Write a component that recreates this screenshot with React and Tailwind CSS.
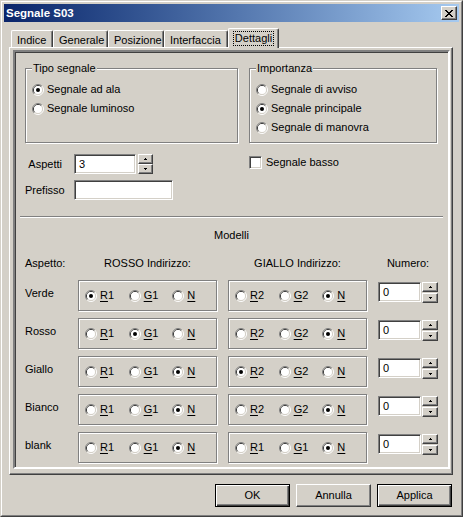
import React from 'react';

const raised = 'border border-t-white border-l-white border-b-[#404040] border-r-[#404040] shadow-[inset_-1px_-1px_0_#808080]';
const sunken = 'border border-t-[#808080] border-l-[#808080] border-b-white border-r-white shadow-[inset_1px_1px_0_#404040,inset_-1px_-1px_0_#d4d0c8]';
const etched = 'border border-[#808080] shadow-[1px_1px_0_#fff,inset_1px_1px_0_#fff]';

function Radio({ checked }) {
  return (
    <svg width="12" height="12" viewBox="0 0 12 12" className="shrink-0">
      <path d="M2.11 9.89 A5.5 5.5 0 0 1 9.89 2.11" fill="none" stroke="#808080" />
      <path d="M9.89 2.11 A5.5 5.5 0 0 1 2.11 9.89" fill="none" stroke="#ffffff" />
      <path d="M2.82 9.18 A4.5 4.5 0 0 1 9.18 2.82" fill="none" stroke="#404040" />
      <path d="M9.18 2.82 A4.5 4.5 0 0 1 2.82 9.18" fill="none" stroke="#d4d0c8" />
      <circle cx="6" cy="6" r="4" fill="#ffffff" />
      {checked && <circle cx="6" cy="6" r="2" fill="#000000" />}
    </svg>
  );
}

function Arrow({ up }) {
  return (
    <svg width="3" height="2" viewBox="0 0 3 2" shapeRendering="crispEdges">
      {up ? (
        <>
          <rect x="1" y="0" width="1" height="1" fill="#000" />
          <rect x="0" y="1" width="3" height="1" fill="#000" />
        </>
      ) : (
        <>
          <rect x="0" y="0" width="3" height="1" fill="#000" />
          <rect x="1" y="1" width="1" height="1" fill="#000" />
        </>
      )}
    </svg>
  );
}

function Spin({ wide }) {
  return (
    <div className={`flex flex-col ${wide ? 'w-[16px] gap-px' : 'w-[15px]'}`}>
      <div className={`h-[10px] flex items-center justify-center bg-[#d4d0c8] ${raised}`}>
        <Arrow up />
      </div>
      <div className={`h-[10px] flex items-center justify-center bg-[#d4d0c8] ${raised}`}>
        <Arrow />
      </div>
    </div>
  );
}

function Group({ label, className, children }) {
  return (
    <div className={`relative ${etched} ${className}`}>
      <span className="absolute left-[6px] -top-[7px] bg-[#d4d0c8] px-px leading-[13px]">{label}</span>
      {children}
    </div>
  );
}

function OptRow({ checked, children }) {
  return (
    <div className="h-[19px] flex items-center pl-[6px] gap-[3px]">
      <Radio checked={checked} />
      <span>{children}</span>
    </div>
  );
}

function Key({ k, rest }) {
  return (
    <span>
      <span className="underline underline-offset-[2px]">{k}</span>
      {rest}
    </span>
  );
}

function AddrBox({ labels, sel }) {
  return (
    <div className={`w-[139px] h-[31px] flex items-center pl-[6px] ${etched}`}>
      {labels.map((l, i) => (
        <div key={i} className="w-[45px] flex items-center gap-[3px]">
          <Radio checked={sel === i} />
          <Key k={l[0]} rest={l.slice(1)} />
        </div>
      ))}
    </div>
  );
}

const rows = [
  { name: 'Verde', r: 0, g: 2, gl: ['R2', 'G2', 'N'] },
  { name: 'Rosso', r: 1, g: 2, gl: ['R2', 'G2', 'N'] },
  { name: 'Giallo', r: 2, g: 0, gl: ['R2', 'G2', 'N'] },
  { name: 'Bianco', r: 2, g: 2, gl: ['R2', 'G2', 'N'] },
  { name: 'blank', r: 2, g: 2, gl: ['R1', 'G1', 'N'] },
];

const tabs = [
  { label: 'Indice', w: 'w-[42px]' },
  { label: 'Generale', w: 'w-[55px]' },
  { label: 'Posizione', w: 'w-[56px]' },
  { label: 'Interfaccia', w: 'w-[64px]' },
];

export default function App() {
  return (
    <div className="w-[463px] h-[517px] bg-[#d4d0c8] border border-t-[#d4d0c8] border-l-[#d4d0c8] border-b-[#404040] border-r-[#404040] font-['Liberation_Sans',Arial,sans-serif] text-[11px] leading-[13px] text-black">
      <div className="h-full flex flex-col p-[2px] border border-t-white border-l-white border-b-[#808080] border-r-[#808080]">
        {/* title bar */}
        <div className="h-[18px] shrink-0 flex items-center justify-between pl-[2px] pr-[2px] bg-linear-to-r from-[#0a246a] to-[#a6caf0]">
          <span className="font-bold text-white text-[11.5px]">Segnale S03</span>
          <div className={`w-[16px] h-[14px] flex items-center justify-center bg-[#d4d0c8] ${raised}`}>
            <svg width="8" height="7" viewBox="0 0 8 7" shapeRendering="crispEdges">
              <path d="M0 0h2v1h-2zM6 0h2v1h-2zM1 1h2v1h-2zM5 1h2v1h-2zM2 2h4v1h-4zM3 3h2v1h-2zM2 4h4v1h-4zM1 5h2v1h-2zM5 5h2v1h-2zM0 6h2v1h-2zM6 6h2v1h-2z" fill="#000" />
            </svg>
          </div>
        </div>

        {/* tab control */}
        <div className="mt-[6px] ml-[5px] mr-[6px]">
          <div className="flex items-end pl-[2px]">
            {tabs.map((t) => (
              <div
                key={t.label}
                className={`${t.w} h-[17px] flex items-center pl-[5px] pt-[2px] border-t border-l border-r border-t-white border-l-white border-r-[#404040] rounded-tl-[2px] rounded-tr-[2px] shadow-[inset_-1px_0_0_#808080]`}
              >
                {t.label}
              </div>
            ))}
            <div className="relative z-10 w-[51px] h-[20px] -mb-px flex items-center justify-center bg-[#d4d0c8] border-t border-l border-r border-t-white border-l-white border-r-[#404040] rounded-tl-[2px] rounded-tr-[2px] shadow-[inset_-1px_0_0_#808080]">
              <span className="border border-dotted border-black px-px leading-[13px]">Dettagli</span>
            </div>
          </div>

          <div className={`h-[428px] pt-[2px] pl-[3px] pr-[2px] pb-[5px] ${raised}`}>
            <div className={`h-full flex flex-col border-2 border-t-[#808080] border-l-[#808080] border-b-white border-r-white shadow-[inset_1px_1px_0_#404040,inset_-1px_-1px_0_#d4d0c8]`}>
              {/* top section */}
              <div className="mt-[16px] pl-[10px] flex">
                <div className="w-[213px] flex flex-col">
                  <Group label="Tipo segnale" className="h-[75px] pt-[11px]">
                    <OptRow checked>Segnale ad ala</OptRow>
                    <OptRow>Segnale luminoso</OptRow>
                  </Group>
                  <div className="mt-[11px] h-[20px] flex items-center">
                    <span className="w-[37px] text-right">Aspetti</span>
                    <div className={`ml-[12px] w-[62px] h-[20px] bg-white flex items-center pl-[4px] ${sunken}`}>3</div>
                    <div className="ml-[2px]">
                      <Spin />
                    </div>
                  </div>
                  <div className="mt-[6px] h-[20px] flex items-center">
                    <span className="w-[37px] text-right">Prefisso</span>
                    <div className={`ml-[12px] w-[99px] h-[20px] bg-white ${sunken}`} />
                  </div>
                </div>
                <div className="ml-[11px] w-[188px] flex flex-col">
                  <Group label="Importanza" className="h-[75px] pt-[11px]">
                    <OptRow>Segnale di avviso</OptRow>
                    <OptRow checked>Segnale principale</OptRow>
                    <OptRow>Segnale di manovra</OptRow>
                  </Group>
                  <div className="mt-[13px] flex items-center gap-[4px]">
                    <div className={`w-[13px] h-[13px] bg-white ${sunken}`} />
                    <span>Segnale basso</span>
                  </div>
                </div>
              </div>

              {/* separator */}
              <div className="mt-[16px] ml-[5px] w-[423px] border-t border-t-[#808080] border-b border-b-white" />

              <div className="mt-[10px] h-[14px] leading-[14px] text-center">Modelli</div>

              <div className="mt-[14px] h-[14px] leading-[14px] flex pl-[10px]">
                <span className="w-[53px]">Aspetto:</span>
                <span className="w-[139px] text-center">ROSSO Indirizzo:</span>
                <span className="ml-[11px] w-[139px] text-center">GIALLO Indirizzo:</span>
                <span className="ml-[11px] w-[60px] text-center">Numero:</span>
              </div>

              <div className="mt-[10px] flex flex-col gap-[7px] pl-[10px]">
                {rows.map((r) => (
                  <div key={r.name} className="h-[31px] flex">
                    <span className="w-[53px] pt-[6px] leading-[14px]">{r.name}</span>
                    <AddrBox labels={['R1', 'G1', 'N']} sel={r.r} />
                    <div className="ml-[11px]">
                      <AddrBox labels={r.gl} sel={r.g} />
                    </div>
                    <div className={`ml-[11px] mt-[2px] w-[43px] h-[20px] bg-white flex items-center pl-[4px] ${sunken}`}>0</div>
                    <div className="ml-px mt-[2px]">
                      <Spin wide />
                    </div>
                  </div>
                ))}
              </div>
            </div>
          </div>
        </div>

        {/* buttons */}
        <div className="mt-[9px] flex justify-end gap-[6px] pr-[7px]">
          <div className="w-[75px] h-[23px] flex items-center justify-center bg-[#d4d0c8] border border-black shadow-[inset_1px_1px_0_#fff,inset_-1px_-1px_0_#404040,inset_-2px_-2px_0_#808080]">OK</div>
          <div className={`w-[75px] h-[23px] flex items-center justify-center bg-[#d4d0c8] ${raised}`}>Annulla</div>
          <div className="w-[75px] h-[23px] flex items-center justify-center bg-[#d4d0c8] border border-black shadow-[inset_1px_1px_0_#fff,inset_-1px_-1px_0_#404040,inset_-2px_-2px_0_#808080]">Applica</div>
        </div>
      </div>
    </div>
  );
}
